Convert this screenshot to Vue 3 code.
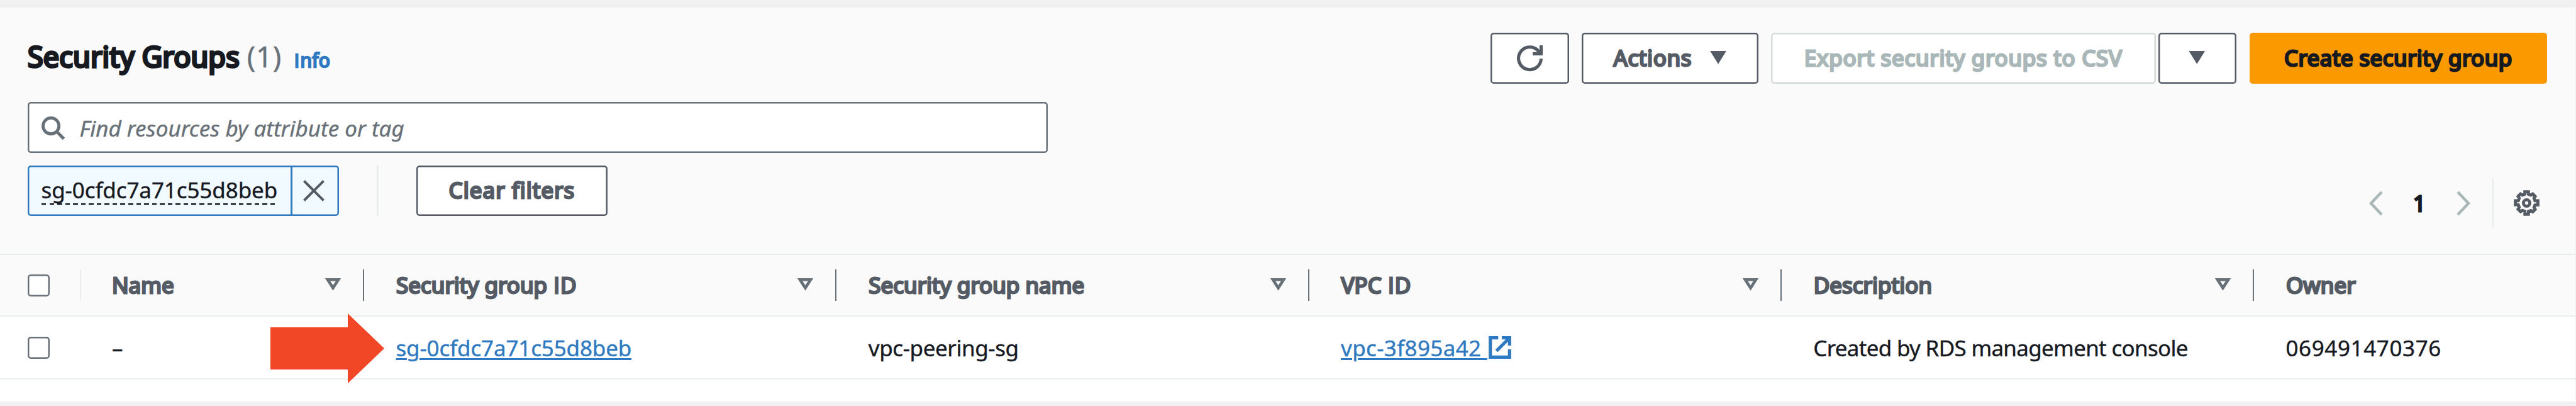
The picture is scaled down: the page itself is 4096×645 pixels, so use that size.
<script setup>
const columns = [
  { text: 'Name', kind: 'name', sort: true },
  { text: 'Security group ', id: true, kind: 'id', sort: true },
  { text: 'Security group name', kind: 'sgname', sort: true },
  { text: 'VPC ', id: true, kind: 'vpc', sort: true },
  { text: 'Description', kind: 'desc', sort: true },
  { text: 'Owner', kind: 'owner', sort: false },
]
</script>

<template>
  <main class="panel">
    <section class="head">
      <div class="toolbar">
        <h1><span class="strong">Security Groups</span><span class="count">(1)</span><a class="info strong"><span class="cap-i">I</span>nfo</a></h1>
        <div class="actions">
          <button class="btn icon-btn">
            <svg class="refresh" viewBox="0 0 16 16"><path d="M15 8.300a7 7 0 1 1-2.400-5.500L14.500 5" /><path d="M15 0v5.200H9.800" /></svg>
          </button>
          <button class="btn act"><span>Actions</span><i class="caret"></i></button>
          <div class="split">
            <button class="btn disabled"><span>Export security groups to CSV</span></button>
            <button class="btn drop"><i class="caret"></i></button>
          </div>
          <button class="btn primary"><span>Create security group</span></button>
        </div>
      </div>

      <div class="search">
        <svg class="glass" viewBox="0 0 38 38"><circle cx="15.5" cy="15.5" r="13" /><path d="M25 25l11.5 11.5" /></svg>
        <span>Find resources by attribute or tag</span>
      </div>

      <div class="filters">
        <div class="token">
          <div class="token-label"><span class="token-text">sg-0cfdc7a71c55d8beb</span></div>
          <div class="token-x"><svg viewBox="0 0 34 34"><path d="M1.5 1.5l31 31M32.5 1.5l-31 31" /></svg></div>
        </div>
        <i class="rule"></i>
        <button class="btn clear"><span>Clear filters</span></button>
        <div class="pager">
          <svg class="chev" viewBox="0 0 22 40"><path d="M20 2L3 20l17 18" /></svg>
          <span class="page strong">1</span>
          <svg class="chev" viewBox="0 0 22 40"><path d="M2 2l17 18L2 38" /></svg>
          <i class="rule"></i>
          <svg class="gear" viewBox="0 0 16 16">
            <path d="M6.900 1h2.200v1.500l1.500.6 1.200-.7 1.500 1.500-.7 1.200.6 1.500H15v2.600h-1.800l-.6 1.500.7 1.200-1.500 1.500-1.200-.7-1.500.6V15H6.900v-1.800l-1.500-.6-1.200.7-1.500-1.500.7-1.200-.6-1.500H1V6.600h1.800l.6-1.500-.7-1.200 1.500-1.500 1.200.7 1.500-.6z" />
            <circle cx="8" cy="8" r="2" />
          </svg>
        </div>
      </div>
    </section>

    <section class="grid thead">
      <div class="check"><i class="box"></i></div>
      <div v-for="c in columns" :key="c.kind" class="th">
        <span class="strong">{{ c.text }}<template v-if="c.id"><span class="cap-i">I</span>D</template></span>
        <svg v-if="c.sort" class="sort" viewBox="0 0 25 20"><path d="M4 2.300H21L12.500 15.500z" /></svg>
      </div>
    </section>
    <section class="grid row">
      <div class="check"><i class="box"></i></div>
      <div class="td">–</div>
      <div class="td"><a class="id-link">sg-0cfdc7a71c55d8beb</a></div>
      <div class="td"><span class="group-name">vpc-peering-sg</span></div>
      <div class="td">
        <a class="vpc-link">vpc-3f895a42&nbsp;</a>
        <svg class="ext" viewBox="0 0 16 16">
          <path d="M6.800 1.200H1.200v13.600h13.600V9.300" />
          <path d="M9.300 1.200h5.500v5.500M14 2L5.500 10.500" />
          <path class="tip" d="M11 1h4v4z" />
        </svg>
      </div>
      <div class="td"><span class="desc">Created by RDS management console</span></div>
      <div class="td"><span class="owner">069491470376</span></div>
      <svg class="pointer" viewBox="0 0 181 111"><path d="M0 22h123V0l58 55.500L123 111V89H0z" /></svg>
    </section>
    <footer></footer>
  </main>
</template>

<style>
body { overflow: hidden; background: #f1f1f1; }
</style>

<style scoped>
* { box-sizing: border-box; }
.panel {
  width: 4096px; height: 645px; padding-top: 12px; padding-right: 1px; background: #f1f1f1;
  font-family: "Noto Sans", "Open Sans", sans-serif; font-size: 35px; color: #16191f; white-space: nowrap;
  -webkit-text-stroke: 0.4px currentColor;
}
i { font-style: normal; display: block; }
svg { display: block; fill: none; flex: none; overflow: visible; }
.strong { font-weight: 400; -webkit-text-stroke: 0.08em currentColor; white-space: pre; }
.cap-i { font-family: "Open Sans", sans-serif; margin: 0 0.03em; }
.head { height: 391px; background: #fafafa; padding: 40px 45px 0 43.500px; }
.toolbar { display: flex; justify-content: space-between; height: 110px; }
h1 { margin: 0; display: flex; align-items: baseline; height: 80px; line-height: 76px; font-size: 45px; font-weight: 400; padding-left: 0.500px; letter-spacing: 0.1px; }
.count { color: #687078; margin-left: 12px; letter-spacing: 0.8px; }
.info { font-size: 30px; color: #2e79c0; margin-left: 19px; letter-spacing: 0.3px; }
.actions { display: flex; gap: 20.500px; }
.btn {
  height: 80.500px; margin: 0; border: 0; border-radius: 5px; padding: 0 0 2px; background: #fff; color: #545b64;
  box-shadow: inset 0 0 0 2.500px #545b64; font: 400 35px "Noto Sans", "Open Sans", sans-serif; letter-spacing: 0.6px;
  display: flex; align-items: center; justify-content: center; white-space: nowrap;
}
.btn span { -webkit-text-stroke: 0.08em currentColor; }
.icon-btn { width: 124.500px; padding: 0; }
.refresh { width: 41px; height: 41px; stroke: #545b64; stroke-width: 2; }
.act { width: 280.500px; gap: 29px; }
.caret { width: 26px; height: 21px; background: #545b64; clip-path: polygon(0 0, 100% 0, 50% 100%); }
.split { display: flex; gap: 4px; }
.disabled { width: 611.500px; color: #aab7b8; box-shadow: inset 0 0 0 2.500px #d5dbdb; letter-spacing: 0.7px; }
.drop { width: 124.500px; padding-right: 1px; }
.primary { width: 473.500px; background: #fa9a00; color: #16191f; box-shadow: none; letter-spacing: 0.4px; }
.search {
  width: 1622px; height: 80.500px; background: #fff; border-radius: 5px; box-shadow: inset 0 0 0 2.500px #687078;
  display: flex; align-items: center; padding: 2px 0 0 22px; gap: 24px; color: #687078; font-style: italic;
}
.glass { width: 37px; height: 37px; stroke: #687078; stroke-width: 5; }
.filters { display: flex; margin-top: 20px; height: 80px; }
.token { width: 495.500px; height: 80px; border-radius: 5px; background: #f1faff; box-shadow: inset 0 0 0 2.500px #2e79c0; display: flex; }
.token-label { width: 421px; border-right: 3px solid #2e79c0; padding-left: 22px; padding-top: 15px; }
.token-text {
  display: block; width: 376px; height: 48px; line-height: 48px; letter-spacing: -0.1px;
  background: repeating-linear-gradient(90deg, #16191f 0 7.500px, transparent 7.500px 12.550px) 0 100% / 100% 2.500px no-repeat;
}
.token-x { flex: 1; display: flex; align-items: center; justify-content: center; padding-right: 5px; }
.token-x svg { width: 34px; height: 34px; stroke: #545b64; stroke-width: 4; }
.rule { width: 2.500px; height: 80px; background: #eaeded; margin-left: 60px; }
.clear { width: 304px; height: 80px; margin-left: 60.500px; letter-spacing: 1px; }
.pager { margin-left: auto; margin-top: 20px; height: 80px; display: flex; align-items: center; padding-right: 12px; }
.chev { width: 22px; height: 40px; stroke: #aab7b8; stroke-width: 4.500; }
.page { width: 22px; text-align: center; margin: 0 47.500px; }
.pager .rule { margin-left: 35px; margin-right: 32px; }
.gear { width: 41px; height: 41px; stroke: #545b64; stroke-width: 1.900; }
.grid {
  display: grid; grid-template-columns: 129px 450px 751.250px 751.250px 751.250px 751.250px 1fr;
  border-top: 2.500px solid #eaeded; align-items: center; position: relative;
}
.thead { height: 98px; background: #fafafa; color: #545b64; }
.check { padding-left: 43.500px; height: 50px; display: flex; align-items: center; }
.thead .check { border-right: 2.500px solid #eaeded; }
.box { width: 35px; height: 35px; border-radius: 5px; background: #fff; box-shadow: inset 0 0 0 2.500px #687078; }
.th { height: 50px; display: flex; align-items: center; justify-content: space-between; padding: 0 35px 2px 51px; border-right: 2.500px solid #687078; }
.th:last-child { border-right: 0; }
.td:nth-child(2), .th:nth-child(2) { padding-left: 49px; }
.sort { width: 25px; height: 20px; stroke: #687078; stroke-width: 4.600; }
.row { height: 100px; background: #fff; }
.td { padding-left: 50.500px; display: flex; align-items: center; height: 50px; }
.td a { color: #2e79c0; text-decoration: underline; text-decoration-thickness: 2.500px; text-underline-offset: 3px; }
.id-link { letter-spacing: -0.15px; }
.group-name { letter-spacing: -0.4px; }
.vpc-link { letter-spacing: 0.35px; }
.desc { letter-spacing: -0.7px; }
.owner { letter-spacing: 0.6px; }
.ext { width: 36px; height: 36px; stroke: #2e79c0; stroke-width: 2.300; margin-left: 2px; }
.tip { fill: #2e79c0; stroke: none; }
.pointer { position: absolute; left: 429.500px; top: -5px; width: 181px; height: 111px; fill: #f24726; }
footer { height: 37px; background: #fff; border-top: 2.500px solid #eaeded; }
</style>
